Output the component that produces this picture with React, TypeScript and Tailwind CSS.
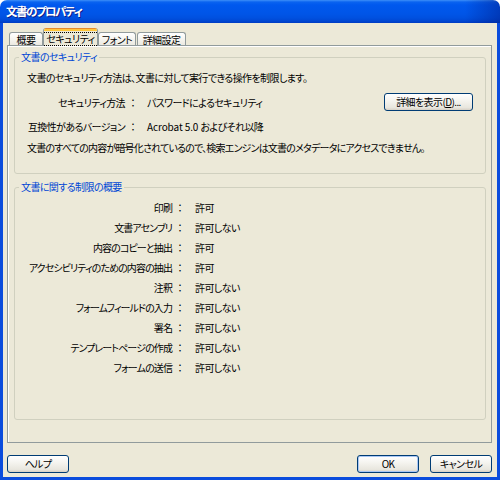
import React from 'react'

const rows: Array<[string, string]> = [
  ['印刷', '許可'],
  ['文書アセンブリ', '許可しない'],
  ['内容のコピーと抽出', '許可'],
  ['アクセシビリティのための内容の抽出', '許可'],
  ['注釈', '許可しない'],
  ['フォームフィールドの入力', '許可しない'],
  ['署名', '許可しない'],
  ['テンプレートページの作成', '許可しない'],
  ['フォームの送信', '許可しない'],
]

const btn =
  'h-[18px] rounded-[3px] border border-[#003C74] bg-[linear-gradient(to_bottom,#FFFFFF_0%,#F4F3EE_45%,#E8E6DE_85%,#D6D0C5_100%)] flex items-center justify-center leading-none text-black'

function Tab({ label, w, active }: { label: string; w: string; active?: boolean }) {
  if (active) {
    return (
      <div
        className={`${w} h-[18px] relative z-10 flex flex-col border-x border-[#919B9C] bg-[#ECE9D8] rounded-t-[3px] overflow-hidden`}
      >
        <div className="h-px bg-[#E68B2C]" />
        <div className="h-[2px] bg-[#FFC73C]" />
        <div className="flex-1 flex items-start justify-center pt-px">
          <span className="border border-dotted border-black px-[3px] leading-[12px]">{label}</span>
        </div>
      </div>
    )
  }
  return (
    <div
      className={`${w} h-[14px] flex items-center justify-center border border-b-0 border-[#919B9C] rounded-t-[3px] bg-[linear-gradient(to_bottom,#FFFFFF,#F3F2EC_60%,#E9E7DE)] leading-none`}
    >
      {label}
    </div>
  )
}

export default function App() {
  return (
    <div
      className={`w-[500px] h-[480px] flex flex-col font-['Noto_Sans_CJK_JP',sans-serif] text-[10px] tracking-[-0.6px] text-black whitespace-nowrap [font-feature-settings:"palt"] select-none`}
    >
      {/* title bar */}
      <div className="h-[23px] shrink-0 rounded-t-[7px] flex items-center pl-[6px] bg-[linear-gradient(to_right,transparent_93%,rgba(0,25,130,0.45)_100%),linear-gradient(to_bottom,#3D8FF8_0px,#0A63F0_2px,#0058EE_5px,#0055E7_14px,#0050DF_18px,#0047D2_21px,#003CC2_23px)]">
        <span className="text-white font-bold text-[11.5px] tracking-[-1.5px] leading-none [text-shadow:1px_1px_0_#0A1E8A]">
          文書のプロパティ
        </span>
      </div>

      <div className="flex-1 flex flex-col bg-[#0A4CDD] px-[3px] pb-[3px]">
        <div className="flex-1 flex flex-col bg-[#ECE9D8] pl-[4px] pr-[5px] pt-[5px]">
          {/* tabs */}
          <div className="h-[18px] -mb-px flex items-end pl-[2px]">
            <Tab label="概要" w="w-[34px]" />
            <Tab label="セキュリティ" w="w-[55px]" active />
            <Tab label="フォント" w="w-[38px]" />
            <div className="w-px" />
            <Tab label="詳細設定" w="w-[49px]" />
          </div>

          {/* tab panel */}
          <div className="h-[398px] border border-[#919B9C] shadow-[inset_1px_1px_0_#FFFFFF] bg-[#ECE9D8] flex flex-col pl-[6px] pr-[5px]">
            <fieldset className="min-w-0 mt-[4px] h-[124px] border border-[#D0D0BF] rounded-[3px]">
              <legend className="ml-[4px] px-[2px] leading-[14px] text-[#0046D5]">文書のセキュリティ</legend>
              <div className="flex flex-col">
                <div className="mt-[3px] h-[20px] flex items-center pl-[12px]">
                  文書のセキュリティ方法は、文書に対して実行できる操作を制限します。
                </div>
                <div className="mt-[5px] h-[20px] flex items-center">
                  <span className="w-[110px] shrink-0 flex justify-end">セキュリティ方法</span>
                  <span className="w-[16px] shrink-0 text-center tracking-normal [font-feature-settings:normal]">：</span>
                  <span className="ml-[6px]">パスワードによるセキュリティ</span>
                  <button className={`${btn} ml-auto mr-[12px] w-[89px]`}>
                    詳細を表示(<span className="underline">D</span>)...
                  </button>
                </div>
                <div className="mt-[4px] h-[20px] flex items-center">
                  <span className="w-[110px] shrink-0 flex justify-end">互換性があるバージョン</span>
                  <span className="w-[16px] shrink-0 text-center tracking-normal [font-feature-settings:normal]">：</span>
                  <span className="ml-[6px]">
                    <span className="tracking-[-0.1px]">Acrobat 5.0 </span>およびそれ以降
                  </span>
                </div>
                <div className="mt-px h-[20px] flex items-center pl-[12px] tracking-[-0.8px]">
                  文書のすべての内容が暗号化されているので、検索エンジンは文書のメタデータにアクセスできません。
                </div>
              </div>
            </fieldset>

            <fieldset className="min-w-0 mt-[6px] h-[240px] border border-[#D0D0BF] rounded-[3px]">
              <legend className="ml-[4px] px-[2px] leading-[14px] text-[#0046D5]">文書に関する制限の概要</legend>
              <div className="mt-[3px] flex flex-col">
                {rows.map(([k, v]) => (
                  <div key={k} className="h-[20px] flex items-center">
                    <span className="w-[157px] shrink-0 flex justify-end tracking-[-0.9px]">{k}</span>
                    <span className="w-[16px] shrink-0 text-center tracking-normal [font-feature-settings:normal]">：</span>
                    <span className="ml-[7px]">{v}</span>
                  </div>
                ))}
              </div>
            </fieldset>
          </div>

          {/* buttons */}
          <div className="mt-[12px] flex items-center">
            <button className={`${btn} w-[62px]`}>ヘルプ</button>
            <div className="flex-1" />
            <button className={`${btn} w-[62px] shadow-[inset_0_0_0_1px_#A9C7F5]`}>OK</button>
            <button className={`${btn} w-[62px] ml-[11px]`}>キャンセル</button>
          </div>
        </div>
      </div>
    </div>
  )
}
